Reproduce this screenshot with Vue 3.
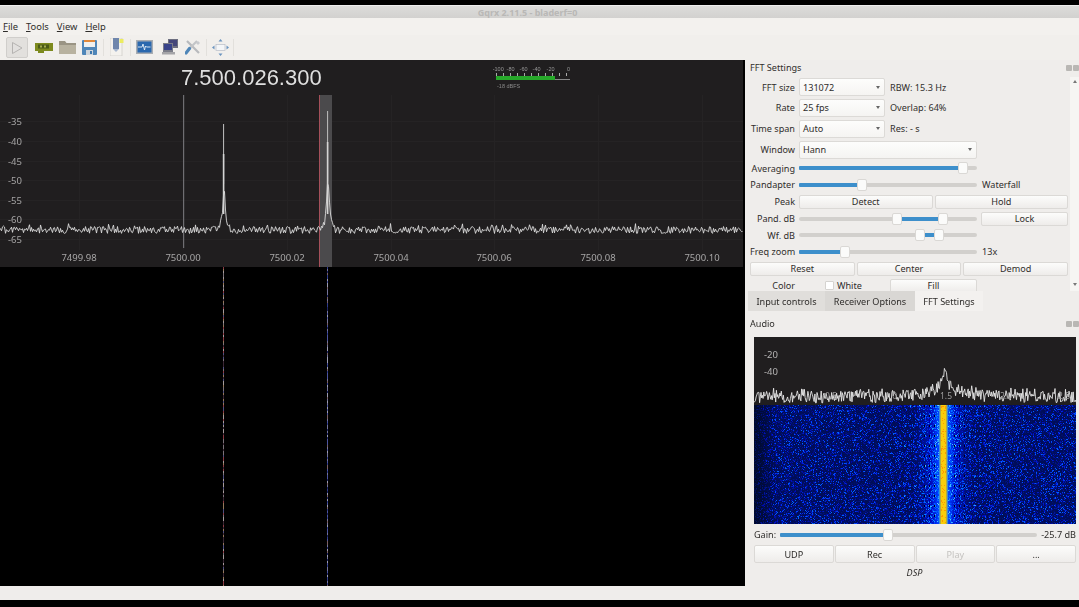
<script setup>
import { onMounted, ref } from 'vue'

const mainPlot = ref(null)
const fall = ref(null)
const audio = ref(null)

const dbLabels = [[-35, 121], [-40, 141], [-45, 161], [-50, 180], [-55, 200], [-60, 219], [-65, 239]]
const freqLabels = [['7499.98', 79], ['7500.00', 183], ['7500.02', 287], ['7500.04', 391], ['7500.06', 494], ['7500.08', 598], ['7500.10', 702]]
const audioX = [['0.5', 71], ['1.0', 131], ['1.5', 186], ['2.0', 246], ['2.5', 304]]
const meterLabels = [['-100', 4], ['-80', 17], ['-60', 30], ['-40', 43], ['-20', 57], ['0', 76]]

const pct = (v) => (v / 178) * 100 + '%'
const sliders = {
  avg: { from: 0, to: 164, thumbs: [164] },
  pan: { from: 0, to: 63, thumbs: [63] },
  pdb: { from: 98, to: 144, thumbs: [98, 144] },
  wdb: { from: 121, to: 140, thumbs: [121, 140] },
  zoom: { from: 0, to: 46, thumbs: [46] }
}

function rng(seed) {
  let s = seed
  return () => {
    s = (s * 1664525 + 1013904223) >>> 0
    return s / 4294967296
  }
}

function drawMain(c) {
  const x = c.getContext('2d')
  const r = rng(7)
  x.fillStyle = '#201e1f'
  x.fillRect(0, 0, 743, 207)
  x.strokeStyle = '#252324'
  x.lineWidth = 1
  for (const f of freqLabels) {
    x.beginPath(); x.moveTo(f[1] + 0.5, 35); x.lineTo(f[1] + 0.5, 190); x.stroke()
  }
  for (const d of dbLabels) {
    x.beginPath(); x.moveTo(0, d[1] - 60 + 0.5); x.lineTo(743, d[1] - 60 + 0.5); x.stroke()
  }
  x.fillStyle = '#4b4a4c'
  x.fillRect(319, 35, 13, 172)
  x.fillStyle = '#a5505a'
  x.fillRect(319, 35, 1, 172)
  x.fillStyle = '#6f6e72'
  x.fillRect(183, 35, 1.2, 153)
  const peak = (px, cx, top) => top * Math.exp(-Math.abs(px - cx) / 1.7)
  x.beginPath()
  for (let i = 0; i < 743; i++) {
    let y = 170 + (r() - 0.5) * 7 + (r() < 0.1 ? -3 : 0)
    y -= peak(i, 223.5, 50) + peak(i, 327.5, 60)
    if (i === 0) x.moveTo(i, y); else x.lineTo(i + 0.5, y)
  }
  x.strokeStyle = '#dcdcdc'
  x.lineWidth = 0.9
  x.stroke()
  x.fillStyle = '#b4b4b4'
  x.fillRect(223, 64, 1.1, 60)
  x.fillRect(327, 51, 1.1, 70)
  x.fillStyle = '#d4d4d4'
  x.fillRect(222.8, 94, 1.6, 60)
  x.fillRect(326.8, 82, 1.6, 72)
}

function drawFall(c) {
  const x = c.getContext('2d')
  const r = rng(11)
  x.fillStyle = '#000'
  x.fillRect(0, 0, 743, 319)
  const cols = ['#7a7278', '#8c3a44', '#94785a', '#505080', '#a49a9a', '#3c2836']
  const cols2 = ['#74749a', '#2f3c8c', '#9c9cb0', '#4c54a0', '#7a6064', '#1c2464']
  for (let y = 0; y < 319; y += 2) {
    x.fillStyle = cols[Math.floor(r() * 6)]
    x.fillRect(223, y, 1, 2)
    x.fillStyle = cols2[Math.floor(r() * 6)]
    x.fillRect(327, y, 1, 2)
  }
}

function drawAudio(c) {
  const x = c.getContext('2d')
  const r = rng(23)
  const W = 322
  x.fillStyle = '#201e1f'
  x.fillRect(0, 0, W, 68)
  const img = x.createImageData(W, 119)
  const cx = 189
  for (let j = 0; j < 119; j++) {
    for (let i = 0; i < W; i++) {
      const d = Math.abs(i - cx)
      let col
      if (d <= 2) {
        col = r() < 0.15 ? [255, 150, 0] : [248, 205, 10]
      } else if (d === 3) {
        col = [170, 170, 70]
      } else if (d === 4) {
        col = [70, 140, 200]
      } else {
        const near = Math.max(0, 1 - d / 34)
        const edge = Math.min(1, i / 22)
        let n = r()
        n = n * n * n * n * n
        let v = (0.13 + n * 0.5 + near * near * 0.5) * (0.25 + 0.75 * edge)
        const row = j % 10 < 2
        if (row && i % 5 < 2 && d < 48) v += 0.2
        col = [
          Math.min(255, v > 0.7 ? (v - 0.7) * 400 : 0),
          Math.min(255, v > 0.3 ? (v - 0.3) * 330 : 8 + v * 40),
          Math.min(255, 25 + v * 480)
        ]
        if (row && d > 6 && d < 22 && i % 5 === 0) col = [0, 0, 24]
      }
      const p = (j * W + i) * 4
      img.data[p] = col[0]; img.data[p + 1] = col[1]; img.data[p + 2] = col[2]; img.data[p + 3] = 255
    }
  }
  x.putImageData(img, 0, 68)
  x.strokeStyle = '#e6e6e6'
  x.lineWidth = 0.9
  x.beginPath()
  for (let i = 0; i < W; i += 0.7) {
    const d = Math.abs(i - 191)
    let y = 66 - r() * 12 - (r() < 0.2 ? 3 : 0)
    y -= 20 * Math.exp(-d / 4) + 8 * Math.exp(-d / 22)
    if (i === 0) x.moveTo(i, y); else x.lineTo(i, y)
  }
  x.stroke()
}

onMounted(() => {
  drawMain(mainPlot.value)
  drawFall(fall.value)
  drawAudio(audio.value)
})
</script>

<template>
  <div class="app">
    <div class="topblack"></div>
    <div class="titlebar">Gqrx 2.11.5 - bladerf=0</div>
    <div class="menubar">
      <span><u>F</u>ile</span><span><u>T</u>ools</span><span><u>V</u>iew</span><span><u>H</u>elp</span>
    </div>
    <div class="toolbar">
      <button class="tool start" title="Start">
        <svg width="14" height="14" viewBox="0 0 14 14"><path d="M2.5 1.5 L12 7 L2.5 12.5 Z" fill="#e2e0de" stroke="#b5b3b1" stroke-width="1"/></svg>
      </button>
      <svg class="ic i1" width="18" height="12" viewBox="0 0 18 12"><path d="M0 1h18v8H9v2H3V9H0z" fill="#7d8a1e"/><rect x="3" y="2.5" width="11" height="4" fill="#4a5a18"/><rect x="5" y="3.5" width="2" height="2" fill="#a8b050"/><rect x="9" y="3.5" width="2" height="2" fill="#a8b050"/></svg>
      <svg class="ic i2" width="17" height="14" viewBox="0 0 17 14"><path d="M0 1h6l1.5 2H17v11H0z" fill="#9a9484"/><rect x="0" y="5" width="17" height="9" fill="#b8b2a0"/></svg>
      <svg class="ic i3" width="15" height="15" viewBox="0 0 15 15"><rect width="15" height="15" rx="1" fill="#4f86b8"/><rect x="2" y="0" width="11" height="7" fill="#f0f0ee"/><rect x="2" y="0" width="11" height="2" fill="#e0883a"/><rect x="4" y="10" width="7" height="5" fill="#cfd6dc"/><rect x="8" y="11" width="2" height="3" fill="#3f78ad"/></svg>
      <span class="sep s1"></span>
      <svg class="ic i4" width="14" height="18" viewBox="0 0 14 18"><rect x="0" y="0" width="12" height="18" fill="#f4f2ee" stroke="#c5c3c0" stroke-width=".6"/><rect x="3" y="0" width="6" height="11" fill="#6f86ac"/><path d="M3 11h6l-3 3z" fill="#a8b8d0"/><rect x="9.5" y="1" width="4" height="4" fill="#ecec60"/></svg>
      <span class="sep s2"></span>
      <svg class="ic i5" width="17" height="14" viewBox="0 0 17 14"><rect width="17" height="14" fill="#a9adb2"/><rect x="1.5" y="1.5" width="14" height="11" fill="#2a68ae"/><path d="M2 7h4l1-3 1.5 6 1-4 1 1h4" fill="none" stroke="#e8f0f8" stroke-width=".9"/></svg>
      <svg class="ic i6" width="16" height="16" viewBox="0 0 16 16"><rect x="6" y="0" width="10" height="9" fill="#6d6f80"/><rect x="7" y="1" width="8" height="6" fill="#44467a"/><rect x="1" y="4" width="10" height="9" fill="#7b7d88"/><rect x="2" y="5" width="8" height="6" fill="#38438a"/><rect x="0" y="13" width="13" height="2.5" fill="#a5a5a8"/></svg>
      <svg class="ic i7" width="15" height="15" viewBox="0 0 15 15"><path d="M2 1 L14 13" stroke="#b8babd" stroke-width="2.2"/><path d="M12 1 L3 10" stroke="#c2c4c7" stroke-width="2.2"/><path d="M4.5 8.5 L1 13" stroke="#4f86b8" stroke-width="3.2" stroke-linecap="round"/><path d="M13 1l2 2-2 2-2-2z" fill="#c8cacd"/></svg>
      <span class="sep s3"></span>
      <svg class="ic i8" width="17" height="17" viewBox="0 0 17 17"><rect x="4" y="5.5" width="9" height="6" fill="#f4f6f8" stroke="#b8bec8" stroke-width=".7"/><path d="M8.5 0l2 2.5h-4zM8.5 17l2-2.5h-4zM0 8.5l2.5-2v4zM17 8.5l-2.5-2v4z" fill="#6a94bf"/></svg>
      <span class="sep s4"></span>
    </div>

    <div class="body">
      <div class="left">
        <div class="plots">
          <div class="plotwrap">
            <canvas ref="mainPlot" width="743" height="207" class="cv"></canvas>
            <div class="freq">7.500.026.300</div>
            <div class="meter">
              <span v-for="m in meterLabels" :key="m[0]" class="mlabel" :style="{ left: m[1] + 'px' }">{{ m[0] }}</span>
              <div class="mticks"></div>
              <div class="mbar"></div>
              <div class="mrest"></div>
              <span class="mdb">-18 dBFS</span>
            </div>
            <span v-for="d in dbLabels" :key="d[0]" class="ylab" :style="{ top: d[1] - 67 + 'px' }">{{ d[0] }}</span>
            <span v-for="f in freqLabels" :key="f[0]" class="xlab" :style="{ left: f[1] - 30 + 'px' }">{{ f[0] }}</span>
          </div>
          <canvas ref="fall" width="743" height="319" class="cv"></canvas>
        </div>
      </div>

      <div class="right">
        <section class="fft">
          <header class="dockhead">FFT Settings<i class="dockbtns"><b></b><b></b></i></header>
          <div class="fftbody">
            <div class="form">
              <div class="row h20">
                <label>FFT size</label><div class="combo"><span>131072</span><em></em></div><span class="info">RBW: 15.3 Hz</span>
              </div>
              <div class="row h21">
                <label>Rate</label><div class="combo"><span>25 fps</span><em></em></div><span class="info">Overlap: 64%</span>
              </div>
              <div class="row h21">
                <label>Time span</label><div class="combo"><span>Auto</span><em></em></div><span class="info">Res: - s</span>
              </div>
              <div class="row h21">
                <label>Window</label><div class="combo wide"><span>Hann</span><em></em></div>
              </div>
              <div class="row h16">
                <label>Averaging</label>
                <div class="slider"><div class="fill" :style="{ left: 0, width: pct(sliders.avg.to) }"></div><div v-for="t in sliders.avg.thumbs" :key="t" class="thumb" :style="{ left: pct(t) }"></div></div>
              </div>
              <div class="row h17">
                <label>Pandapter</label>
                <div class="slider"><div class="fill" :style="{ left: 0, width: pct(sliders.pan.to) }"></div><div v-for="t in sliders.pan.thumbs" :key="t" class="thumb" :style="{ left: pct(t) }"></div></div>
                <span class="info">Waterfall</span>
              </div>
              <div class="row h17">
                <label>Peak</label>
                <div class="btns"><button>Detect</button><button>Hold</button></div>
              </div>
              <div class="row h17">
                <label>Pand. dB</label>
                <div class="slider"><div class="fill" :style="{ left: pct(sliders.pdb.from), width: pct(sliders.pdb.to - sliders.pdb.from) }"></div><div v-for="t in sliders.pdb.thumbs" :key="t" class="thumb" :style="{ left: pct(t) }"></div></div>
                <button class="lock">Lock</button>
              </div>
              <div class="row h16">
                <label>Wf. dB</label>
                <div class="slider"><div class="fill" :style="{ left: pct(sliders.wdb.from), width: pct(sliders.wdb.to - sliders.wdb.from) }"></div><div v-for="t in sliders.wdb.thumbs" :key="t" class="thumb" :style="{ left: pct(t) }"></div></div>
              </div>
              <div class="row h17">
                <label>Freq zoom</label>
                <div class="slider"><div class="fill" :style="{ left: 0, width: pct(sliders.zoom.to) }"></div><div v-for="t in sliders.zoom.thumbs" :key="t" class="thumb" :style="{ left: pct(t) }"></div></div>
                <span class="info">13x</span>
              </div>
              <div class="row h17 three">
                <button>Reset</button><button>Center</button><button>Demod</button>
              </div>
              <div class="row h17">
                <label>Color</label>
                <span class="check"></span><span class="white">White</span>
                <button class="fillbtn">Fill</button>
              </div>
            </div>
            <div class="scroll"><span class="up"></span><span class="down"></span></div>
          </div>
        </section>

        <nav class="tabs">
          <span class="tab t1">Input controls</span>
          <span class="tab t2">Receiver Options</span>
          <span class="tab t3">FFT Settings</span>
        </nav>

        <section class="audio">
          <header class="dockhead ah">Audio<i class="dockbtns"><b></b><b></b></i></header>
          <div class="aplot">
            <canvas ref="audio" width="322" height="187" class="cv"></canvas>
            <span class="aylab a20">-20</span>
            <span class="aylab a40">-40</span>
            <span v-for="a in audioX" :key="a[0]" class="axlab" :style="{ left: a[1] + 'px' }">{{ a[0] }}</span>
          </div>
          <div class="gain">
            <span>Gain:</span>
            <div class="slider gs"><div class="fill" style="left:0;width:42%"></div><div class="thumb" style="left:42%"></div></div>
            <span>-25.7 dB</span>
          </div>
          <div class="abtns">
            <button>UDP</button><button>Rec</button><button class="dis">Play</button><button>...</button>
          </div>
          <div class="dsp">DSP</div>
        </section>
      </div>
    </div>
    <div class="bottomblack"></div>
  </div>
</template>

<style>
html, body { margin: 0; background: #000; overflow: hidden; }
</style>

<style scoped>
.app {
  width: 1079px; height: 607px; display: flex; flex-direction: column;
  font-family: "Noto Sans", "Open Sans", sans-serif; font-size: 9.1px; color: #2f2d2b;
  background: #efedeb; overflow: hidden; filter: blur(0.45px);
}
.topblack { height: 5px; background: #000; flex: none; }
.titlebar {
  height: 13px; flex: none; box-sizing: border-box; background: linear-gradient(#dcdcda, #d2d1cf); text-align: center; line-height: 13px;
  font-size: 9px; font-weight: 700; color: #b9b8b6; padding-right: 24px; border-top: 1px solid #eee;
}
.menubar {
  height: 17px; flex: none; display: flex; background: #f3f1ee; align-items: center; padding: 0 0 0 3px; gap: 8px; font-size: 9.4px; color: #2f2d2b;
}
.toolbar { height: 25px; flex: none; position: relative; background: #f1efec; }
.tool.start {
  position: absolute; left: 6px; top: 2px; width: 22px; height: 21px; padding: 0; margin: 0; display: flex; align-items: center; justify-content: center;
  background: #e2e0dd; border: 1px solid #d0cecb; border-radius: 2px;
}
.ic { position: absolute; }
.i1 { left: 35px; top: 7px; }
.i2 { left: 59px; top: 5px; }
.i3 { left: 82px; top: 5px; }
.i4 { left: 110px; top: 3px; }
.i5 { left: 136px; top: 5px; }
.i6 { left: 162px; top: 4px; }
.i7 { left: 185px; top: 5px; }
.i8 { left: 212px; top: 4px; }
.sep { position: absolute; top: 4px; width: 1px; height: 17px; background: #e2e0dc; }
.s1 { left: 103px; } .s2 { left: 130px; } .s3 { left: 206px; } .s4 { left: 233px; }

.body { flex: 1; display: flex; min-height: 0; }
.left { width: 745px; flex: none; display: flex; flex-direction: column; background: #efedeb; }
.plots { height: 526px; width: 743px; border-right: 2px solid #000; background: #000; display: flex; flex-direction: column; }
.plotwrap { position: relative; height: 207px; flex: none; }
.cv { display: block; }

.freq {
  position: absolute; left: 181px; top: 6px; font-family: "Liberation Sans", sans-serif; font-size: 22px; line-height: 24px; color: #dfdfdf;
}
.meter { position: absolute; left: 492px; top: 6px; width: 82px; height: 26px; color: #9a9a9a; font-size: 5.5px; font-family: "Liberation Sans", sans-serif; }
.mlabel { position: absolute; top: 0; line-height: 7px; transform: translateX(-30%); }
.mticks { position: absolute; left: 4px; top: 7px; width: 74px; height: 3px; background: repeating-linear-gradient(90deg, #aaa 0 1px, transparent 1px 7px); }
.mbar { position: absolute; left: 4px; top: 10px; width: 59px; height: 4px; background: #27a82a; }
.mrest { position: absolute; left: 63px; top: 13px; width: 15px; height: 1px; background: #888; }
.mdb { position: absolute; left: 5px; top: 17px; line-height: 7px; color: #8a8a8a; }
.ylab { position: absolute; left: 8px; font-size: 9.5px; line-height: 14px; color: #a5a4a4; margin-top: 1px; }
.xlab { position: absolute; top: 191px; width: 60px; text-align: center; font-size: 9.5px; line-height: 14px; color: #a8a7a7; }

.right { flex: 1; min-width: 0; display: flex; flex-direction: column; background: #efedeb; }
.fft { height: 231px; flex: none; overflow: hidden; }
.dockhead { height: 17px; flex: none; line-height: 16px; padding-left: 5px; position: relative; }
.dockbtns { position: absolute; right: 0; top: 5px; display: flex; gap: 1px; }
.dockbtns b { width: 6px; height: 6px; background: #b9b7b4; display: block; border-radius: 1px; }
.fftbody { display: flex; }
.form { width: 319px; margin-left: 5px; flex: none; }
.row { display: flex; align-items: center; }
.h16 { height: 16px; } .h17 { height: 17px; } .h20 { height: 20px; } .h21 { height: 21px; }
.row label { width: 45px; flex: none; margin-right: 4px; text-align: right; white-space: nowrap; }
.combo {
  width: 86px; height: 18px; box-sizing: border-box; display: flex; align-items: center; justify-content: space-between; padding: 0 3px;
  background: linear-gradient(#fdfdfc, #f5f4f2); border: 1px solid #dcdad7; border-radius: 2px;
}
.combo em { width: 0; height: 0; border-left: 2.5px solid transparent; border-right: 2.5px solid transparent; border-top: 3px solid #666; margin-right: 1px; }
.combo.wide { width: 178px; }
.info { margin-left: 5px; white-space: nowrap; }
.slider { width: 178px; height: 4px; background: #d2d0cd; border-radius: 2px; position: relative; flex: none; }
.fill { position: absolute; top: 0; height: 4px; background: #3d8fcb; border-radius: 1px; }
.thumb { position: absolute; top: -4px; width: 10px; height: 12px; margin-left: -5px; box-sizing: border-box; background: #fbfbfa; border: 1px solid #dad8d5; border-radius: 2px; }
button {
  font: inherit; color: #2f2d2b; height: 14px; padding: 0; box-sizing: border-box; background: linear-gradient(#fcfcfb, #eeecea);
  border: 1px solid #dbd9d6; border-radius: 2px; line-height: 11px;
}
.btns { display: flex; gap: 2px; width: 269px; }
.btns button { flex: 1; }
.lock { width: 87px; margin-left: 4px; }
.three { gap: 2px; width: 318px; }
.three button { flex: 1; }
.check { width: 9px; height: 9px; box-sizing: border-box; margin-left: 26px; background: #fff; border: 1px solid #d5d3d0; border-radius: 1px; }
.white { margin-left: 3px; width: 53px; }
.fillbtn { width: 87px; }
.scroll { width: 10px; margin-left: 1px; height: 214px; background: #f6f5f3; position: relative; }
.up, .down { position: absolute; left: 3px; width: 0; height: 0; border-left: 2px solid transparent; border-right: 2px solid transparent; }
.up { top: 3px; border-bottom: 3px solid #777; }
.down { bottom: 5px; border-top: 3px solid #777; }

.tabs { height: 20px; flex: none; display: flex; padding-left: 3px; }
.tab { display: flex; align-items: center; justify-content: center; }
.t1 { width: 77px; background: #e0dedb; }
.t2 { width: 90px; background: #d9d7d4; }
.t3 { width: 68px; background: #f3f1ef; }

.audio { flex: 1; min-height: 0; }
.ah { height: 26px; line-height: 26px; }
.ah .dockbtns { top: 10px; }
.aplot { position: relative; margin-left: 9px; width: 322px; height: 187px; }
.aylab { position: absolute; left: 10px; font-size: 9.5px; line-height: 12px; color: #b5b4b4; }
.a20 { top: 12px; } .a40 { top: 29px; }
.axlab { position: absolute; top: 54px; font-size: 8.5px; line-height: 10px; color: #9a9a9a; }
.gain { display: flex; align-items: center; margin: 3px 3px 0 9px; height: 15px; justify-content: space-between; }
.gs { width: 257px; }
.abtns { display: flex; gap: 1px; margin: 3px 3px 0 9px; }
.abtns button { flex: 1; height: 18px; }
.abtns .dis { color: #c5c3c0; }
.dsp { text-align: center; margin-top: 4px; margin-left: 5px; font-style: italic; line-height: 12px; }
.bottomblack { height: 7px; flex: none; background: #000; }
</style>
